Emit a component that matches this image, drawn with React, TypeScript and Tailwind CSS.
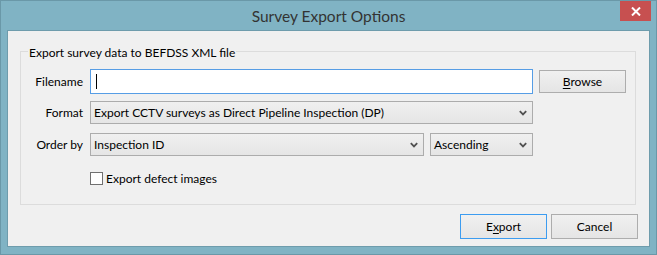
import React from "react";

const font = { fontFamily: 'Lato, "Noto Sans", sans-serif' };

function Chevron() {
  return (
    <svg width="8" height="6" viewBox="0 0 8 6" className="shrink-0">
      <path d="M0.8 1.2 L4 4.4 L7.2 1.2" fill="none" stroke="#505050" strokeWidth="1.8" />
    </svg>
  );
}

function Combo({ text, className }: { text: string; className: string }) {
  return (
    <div
      className={`h-[23px] border border-[#acacac] bg-gradient-to-b from-[#f0f0f0] to-[#e5e5e5] flex items-center pl-[3px] pr-[5px] ${className}`}
    >
      <span className="flex-1 text-[12px] text-black leading-[17px] whitespace-nowrap">{text}</span>
      <Chevron />
    </div>
  );
}

function Button({ children, def, className }: { children: React.ReactNode; def?: boolean; className: string }) {
  return (
    <div
      className={`border ${def ? "border-[#3c9cf0]" : "border-[#adadad]"} bg-gradient-to-b from-[#f0f0f0] to-[#e5e5e5] flex items-center justify-center text-[12px] text-black leading-[17px] ${className}`}
    >
      {children}
    </div>
  );
}

export default function App() {
  return (
    <div style={font} className="w-[657px] h-[255px] bg-[#80b3c4] border border-[#6a98a8] flex flex-col">
      <div className="relative h-[29px] flex items-center justify-center">
        <span className="text-[15.5px] text-[#333333] leading-[20px]">Survey Export Options</span>
        <div className="absolute top-0 right-[5px] w-[31px] h-[20px] bg-[#c75050] flex items-center justify-center">
          <svg width="10" height="9" viewBox="0 0 10 9">
            <path d="M1 0.5 L9 8.5 M9 0.5 L1 8.5" stroke="#ffffff" strokeWidth="2" />
          </svg>
        </div>
      </div>
      <div className="mx-[6px] h-[217px] border border-[#6e9cac] bg-[#f0f0f0] flex flex-col">
        <div className="relative mt-[20px] ml-[12px] w-[616px] h-[154px] border border-[#dcdcdc] pt-[17px]">
          <div className="absolute -top-[8px] left-[7px] bg-[#f0f0f0] px-[1px] text-[12px] text-black leading-[17px] whitespace-nowrap">
            Export survey data to BEFDSS XML file
          </div>
          <div className="flex items-center h-[25px]">
            <div className="w-[62px] text-right text-[12px] text-black leading-[17px]">Filename</div>
            <div className="ml-[7px] w-[443px] h-[25px] border border-[#569de5] bg-white flex items-center pl-[5px]">
              <div className="w-[1px] h-[15px] bg-black" />
            </div>
            <Button className="ml-[6px] w-[87px] h-[23px]">
              <span>
                <span className="underline underline-offset-2">B</span>rowse
              </span>
            </Button>
          </div>
          <div className="flex items-center h-[23px] mt-[7px]">
            <div className="w-[62px] text-right text-[12px] text-black leading-[17px]">Format</div>
            <Combo className="ml-[7px] w-[443px]" text="Export CCTV surveys as Direct Pipeline Inspection (DP)" />
          </div>
          <div className="flex items-center h-[23px] mt-[9px]">
            <div className="w-[62px] text-right text-[12px] text-black leading-[17px]">Order by</div>
            <Combo className="ml-[7px] w-[334px]" text="Inspection ID" />
            <Combo className="ml-[6px] w-[103px]" text="Ascending" />
          </div>
          <div className="flex items-center mt-[16px] ml-[69px] h-[13px]">
            <div className="w-[13px] h-[13px] border border-[#707070] bg-white shrink-0" />
            <span className="ml-[3px] text-[12px] text-black leading-[17px] whitespace-nowrap">Export defect images</span>
          </div>
        </div>
        <div className="flex justify-end gap-[4px] mt-[9px] pr-[11px]">
          <Button def className="w-[87px] h-[25px]">
            <span>
              E<span className="underline underline-offset-2">x</span>port
            </span>
          </Button>
          <Button className="w-[87px] h-[25px]">Cancel</Button>
        </div>
      </div>
    </div>
  );
}
